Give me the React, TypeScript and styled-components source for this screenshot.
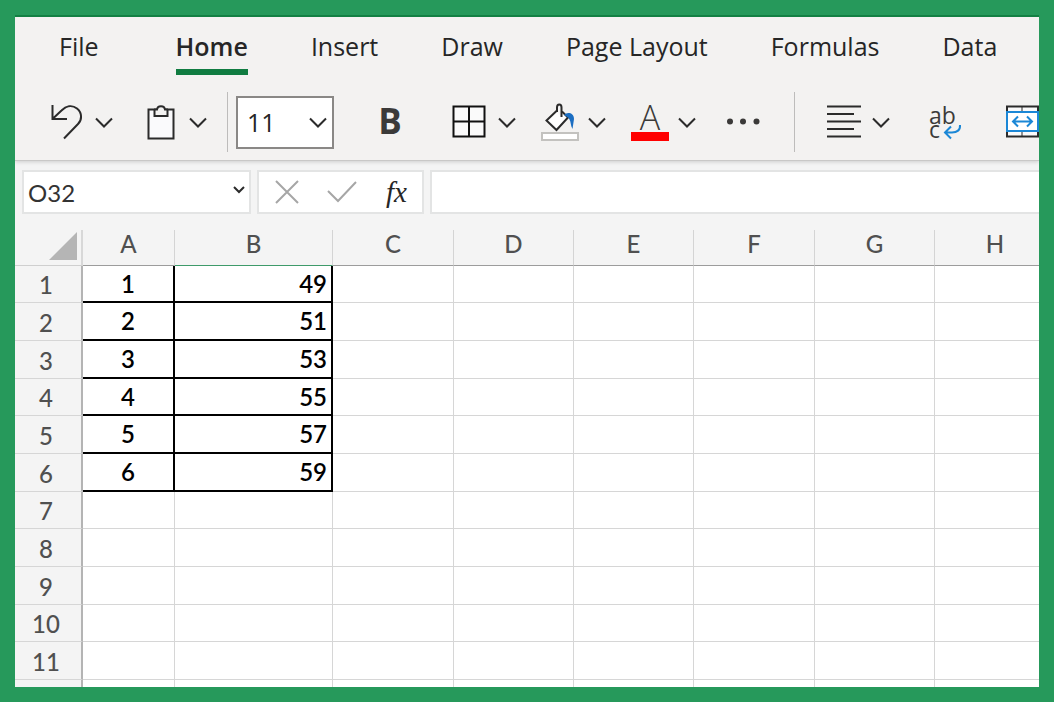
import React from "react";
import styled, { createGlobalStyle } from "styled-components";

const ui = `"Open Sans", "Noto Sans", sans-serif`;
const sheet = `Lato, "Open Sans", sans-serif`;

const GlobalStyle = createGlobalStyle`
  *, *::before, *::after { box-sizing: border-box; }
  body { margin: 0; background: #26995b; }
  button, input, select { font: inherit; color: inherit; margin: 0; border: 0; padding: 0; background: none; }
`;

const Frame = styled.div`
  height: 100vh;
  padding: 15px;
  background: #26995b;
`;

const Workbook = styled.main`
  display: flex;
  flex-direction: column;
  height: 100%;
  overflow: hidden;
  border-top: 2px solid #138043;
  background: #f4f4f4;
  color: #262626;
  font-family: ${ui};
`;

const Ribbon = styled.header`
  flex: none;
  background: #f3f2f1;
  border-bottom: 1px solid #c9c8c7;
  box-shadow: 0 1px 4px rgba(0, 0, 0, 0.16);
`;

const Tabs = styled.nav`
  display: flex;
  gap: 63px;
  padding: 8px 0 0 44px;
`;

const Tab = styled.button<{ $active?: boolean; $wide?: boolean }>`
  flex: none;
  height: 50px;
  margin-right: ${(p) => (p.$wide ? 14 : 0)}px;
  padding-bottom: 2px;
  border-bottom: 6px solid ${(p) => (p.$active ? "#107c41" : "transparent")};
  font-size: 25px;
  line-height: 40px;
  font-weight: ${(p) => (p.$active ? 600 : 400)};
`;

const Toolbar = styled.div`
  display: flex;
  align-items: center;
  padding: 17px 0 8px 33px;
`;

const Group = styled.div<{ $gap: number }>`
  display: flex;
  flex: none;
  align-items: center;
  gap: ${(p) => p.$gap}px;
`;

const Divider = styled.div<{ $before: number; $after: number }>`
  flex: none;
  width: 1px;
  height: 60px;
  margin: 0 ${(p) => p.$after}px 0 ${(p) => p.$before}px;
  background: #bdbcbb;
`;

const Tool = styled.button`
  display: flex;
  flex: none;
  align-items: center;
  justify-content: center;
  gap: 9px;
  height: 44px;
`;

const BoldTool = styled(Tool)`
  width: 62px;
  margin-right: 5px;
  padding-bottom: 4px;
  color: #3b3a39;
  font-size: 35px;
  font-weight: 700;
`;

const Icon = styled.svg`
  display: block;
  flex: none;
  overflow: visible;
  fill: none;
  stroke: #2b2b2b;
  stroke-width: 2;
  text {
    font-family: ${ui};
    fill: #3b3a39;
    stroke: none;
  }
`;

const SizeBox = styled.label`
  display: grid;
  width: 98px;
  height: 53px;
  border: 2px solid #8a8886;
  background: #fff;
  > * { grid-area: 1 / 1; }
  > svg { place-self: center end; margin-right: 5px; pointer-events: none; }
`;

const SizeSelect = styled.select`
  appearance: none;
  width: 100%;
  padding-left: 9px;
  font-size: 25px;
`;

const FormulaBar = styled.section`
  display: flex;
  flex: none;
  gap: 6px;
  padding: 9px 0 16px 7px;
`;

const Box = styled.div`
  display: flex;
  flex: none;
  align-items: center;
  height: 44px;
  border: 2px solid #e3e4e4;
  background: #fff;
`;

const NameBox = styled(Box)`
  width: 229px;
  padding: 0 4px;
`;

const NameInput = styled.input`
  flex: 1;
  min-width: 0;
  color: #333;
  font-family: ${sheet};
  font-size: 24px;
`;

const Actions = styled(Box)`
  width: 167px;
  justify-content: space-between;
  padding: 0 15px;
`;

const FxButton = styled.button`
  font-family: "Liberation Serif", serif;
  font-style: italic;
  font-size: 29px;
  line-height: 36px;
`;

const FormulaInput = styled.input`
  flex: 1;
  min-width: 0;
  height: 44px;
  padding: 0 8px;
  border: 2px solid #e3e4e4;
  border-right: 0;
  background: #fff;
  font-family: ${sheet};
  font-size: 24px;
`;

const SheetArea = styled.section`
  flex: 1;
  min-height: 0;
  overflow: hidden;
  background: #fff;
`;

const Grid = styled.table`
  table-layout: fixed;
  width: 100%;
  min-width: 1041px;
  border-collapse: separate;
  border-spacing: 0;
  font-family: ${sheet};
  font-size: 24px;
  line-height: 30px;
`;

const Col = styled.col<{ $w?: number }>`
  width: ${(p) => (p.$w ? `${p.$w}px` : "auto")};
`;

const HeadCell = styled.th<{ $marked?: boolean }>`
  height: 36px;
  padding: 0 0 7px;
  border-right: 1px solid #d4d4d4;
  border-bottom: 1px solid ${(p) => (p.$marked ? "#3f9a6a" : "#9c9c9c")};
  background: #f4f4f4;
  color: #505050;
  font-weight: 500;
  line-height: 28px;
  vertical-align: top;
`;

const Corner = styled(HeadCell)`
  padding: 2px 4px 5px 0;
  border-right: 2px solid #d8d8d8;
  border-bottom-color: #cfcfcf;
  svg { display: block; margin-left: auto; }
`;

const Row = styled.tr`
  height: 38px;
  &:nth-child(3n + 1) { height: 37px; }
`;

const RowHead = styled.th`
  padding: 2px 4px 0 0;
  border-right: 2px solid #b4b4b4;
  border-bottom: 1px solid #d6d6d6;
  background: #f4f4f4;
  color: #505050;
  font-weight: 500;
`;

const Cell = styled.td<{ $boxed?: boolean; $align?: string }>`
  padding: 0 4px;
  border-style: solid;
  border-color: ${(p) => (p.$boxed ? "#000" : "#d6d6d6")};
  border-width: ${(p) => (p.$boxed ? "0 2px 2px 0" : "0 1px 1px 0")};
  background: #fff;
  color: #000;
  font-weight: 600;
  text-align: ${(p) => p.$align || "left"};
`;

const Chevron = () => (
  <Icon width="18" height="44" viewBox="0 0 18 44">
    <path d="M1 18.500L9 26.500L17 18.500" />
  </Icon>
);

const UndoIcon = () => (
  <Icon width="38" height="44" viewBox="0 0 38 44">
    <path d="M4.500 5V19H19M5 18.500L13.500 10.500C18 6 24 4.500 29 8.500C34.500 13 34 20 30 24L16 38.500" />
  </Icon>
);

const ClipboardIcon = () => (
  <Icon width="38" height="44" viewBox="0 0 38 44">
    <rect x="6.500" y="9.500" width="25" height="29" fill="#fafafc" />
    <path d="M12.500 9.500V16H25.500V9.500H23C22.500 5 15.500 5 15 9.500Z" fill="#f3f2f1" stroke="none" />
    <path d="M12.500 9.500V16H25.500V9.500M12 9.500H15C15.500 5 22.500 5 23 9.500H26" />
  </Icon>
);

const BordersIcon = () => (
  <Icon width="38" height="44" viewBox="0 0 38 44">
    <path d="M2.500 6.500H33.500V36.500H2.500ZM18 6.500V36.500M2.500 21.500H33.500" fill="#fafafa" stroke="#111" />
  </Icon>
);

const FillIcon = () => (
  <Icon width="38" height="44" viewBox="0 0 38 44">
    <path d="M16 10.500L5.500 20.500L15.500 30L27 17.500L21 11.500" fill="#fff" />
    <path d="M16 12V7.500C16 3.500 20.500 3.500 20.500 7.500V17" fill="#f7f7f7" />
    <path d="M23 15C26 11.500 33 12.500 33 19L31.500 29C29.500 26 30 22 28.500 19.500C27.500 17 25.500 16.500 23 15Z" fill="#1b6ec2" stroke="none" />
    <rect x="1" y="33" width="36" height="7" fill="#fff" stroke="#c3c2bf" />
  </Icon>
);

const FontColorIcon = () => (
  <Icon width="38" height="44" viewBox="0 0 38 44">
    <text x="19" y="30" fontSize="34" fontWeight="300" textAnchor="middle">A</text>
    <rect y="32" width="38" height="9" fill="#f00" stroke="none" />
  </Icon>
);

const MoreIcon = () => (
  <Icon width="38" height="44" viewBox="0 0 38 44">
    <g fill="#3b3a39" stroke="none">
      <circle cx="9" cy="21.500" r="3" />
      <circle cx="22" cy="21.500" r="3" />
      <circle cx="35.500" cy="21.500" r="3" />
    </g>
  </Icon>
);

const AlignIcon = () => (
  <Icon width="38" height="44" viewBox="0 0 38 44">
    <path d="M2 6.500H36M2 14H29M2 21.500H36M2 29H29M2 36.500H36" />
  </Icon>
);

const WrapIcon = () => (
  <Icon width="38" height="44" viewBox="0 0 38 44">
    <text x="1" y="24" fontSize="23">ab</text>
    <text x="1" y="38" fontSize="23">c</text>
    <path d="M32 25C32.500 30 29 32.500 24 32.500H17M23 26.500L17 32.500L23 38.500" stroke="#1b87d6" />
  </Icon>
);

const MergeIcon = () => (
  <Icon width="38" height="44" viewBox="0 0 38 44">
    <path d="M3 6.500H34V36.500H3Z" fill="#fafafa" />
    <path d="M18 6.500V12M18 31V36.500" strokeWidth="1" />
    <rect x="3" y="12" width="31" height="19" fill="#fff" stroke="#1b87d6" />
    <path d="M9 21.500H28M14 16.500L9 21.500L14 26.500M23 16.500L28 21.500L23 26.500" stroke="#1b87d6" />
  </Icon>
);

const tabs = ["File", "Home", "Insert", "Draw", "Page Layout", "Formulas", "Data"];

const columns: { name: string; width?: number }[] = [
  { name: "A", width: 92 },
  { name: "B", width: 158 },
  { name: "C", width: 121 },
  { name: "D", width: 120 },
  { name: "E", width: 120 },
  { name: "F", width: 121 },
  { name: "G", width: 120 },
  { name: "H" },
];

const data = [[1, 49], [2, 51], [3, 53], [4, 55], [5, 57], [6, 59]];
const rows = Array.from({ length: 12 }, (_, i) => i);

export default function App() {
  return (
    <>
      <GlobalStyle />
      <Frame>
        <Workbook>
          <Ribbon>
            <Tabs aria-label="Ribbon">
              {tabs.map((t) => (
                <Tab key={t} type="button" $active={t === "Home"} $wide={t === "File"}>{t}</Tab>
              ))}
            </Tabs>
            <Toolbar>
              <Group $gap={29}>
                <Tool type="button" aria-label="Undo"><UndoIcon /><Chevron /></Tool>
                <Tool type="button" aria-label="Paste"><ClipboardIcon /><Chevron /></Tool>
              </Group>
              <Divider $before={20} $after={8} />
              <Group $gap={25}>
                <SizeBox>
                  <SizeSelect aria-label="Font size" defaultValue="11">
                    <option>10</option>
                    <option>11</option>
                    <option>12</option>
                  </SizeSelect>
                  <Chevron />
                </SizeBox>
                <BoldTool type="button" aria-label="Bold">B</BoldTool>
                <Tool type="button" aria-label="Borders"><BordersIcon /><Chevron /></Tool>
                <Tool type="button" aria-label="Fill color"><FillIcon /><Chevron /></Tool>
                <Tool type="button" aria-label="Font color"><FontColorIcon /><Chevron /></Tool>
                <Tool type="button" aria-label="More font options"><MoreIcon /></Tool>
              </Group>
              <Divider $before={35} $after={30} />
              <Group $gap={38}>
                <Tool type="button" aria-label="Align"><AlignIcon /><Chevron /></Tool>
                <Tool type="button" aria-label="Wrap text"><WrapIcon /></Tool>
                <Tool type="button" aria-label="Merge cells"><MergeIcon /></Tool>
              </Group>
            </Toolbar>
          </Ribbon>
          <FormulaBar>
            <NameBox>
              <NameInput aria-label="Name box" defaultValue="O32" />
              <Icon width="12" height="16" viewBox="0 0 12 16">
                <path d="M1 3L6 8L11 3" />
              </Icon>
            </NameBox>
            <Actions>
              <button type="button" aria-label="Cancel">
                <Icon width="26" height="26" viewBox="0 0 26 26">
                  <path d="M2 2L24 24M24 2L2 24" stroke="#a6a6a6" />
                </Icon>
              </button>
              <button type="button" aria-label="Enter">
                <Icon width="32" height="26" viewBox="0 0 32 26">
                  <path d="M1 12L11 22L29 3" stroke="#a6a6a6" />
                </Icon>
              </button>
              <FxButton type="button" aria-label="Insert function">fx</FxButton>
            </Actions>
            <FormulaInput aria-label="Formula" />
          </FormulaBar>
          <SheetArea>
            <Grid>
              <colgroup>
                <Col $w={68} />
                {columns.map((c) => <Col key={c.name} $w={c.width} />)}
              </colgroup>
              <thead>
                <tr>
                  <Corner aria-label="Select all">
                    <svg width="28" height="28" viewBox="0 0 28 28"><path d="M28 0V28H0Z" fill="#b5b5b5" /></svg>
                  </Corner>
                  {columns.map((c) => (
                    <HeadCell key={c.name} scope="col" $marked={c.name === "B"}>{c.name}</HeadCell>
                  ))}
                </tr>
              </thead>
              <tbody>
                {rows.map((r) => (
                  <Row key={r}>
                    <RowHead scope="row">{r + 1}</RowHead>
                    {columns.map((c, i) => {
                      const value = data[r]?.[i];
                      return (
                        <Cell key={c.name} $boxed={value !== undefined} $align={i === 0 ? "center" : "right"}>{value}</Cell>
                      );
                    })}
                  </Row>
                ))}
              </tbody>
            </Grid>
          </SheetArea>
        </Workbook>
      </Frame>
    </>
  );
}
